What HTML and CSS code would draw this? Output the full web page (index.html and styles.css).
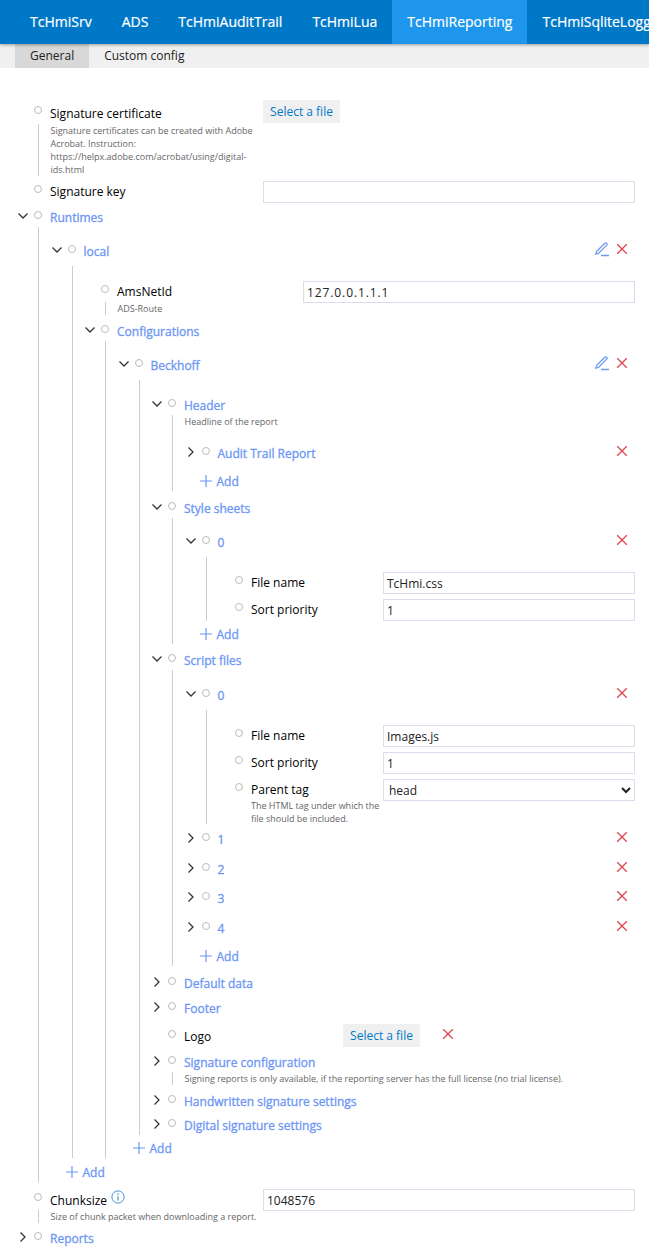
FILE: index.html
```html
<!DOCTYPE html>
<html lang="en">
<head>
    <meta charset="UTF-8">
    <meta name="viewport" content="width=device-width, initial-scale=1.0">
    <title>TcHmiReporting</title>
    <link rel="stylesheet" href="styles.css">
</head>
<body>
    <svg class="icon-defs" width="0" height="0">
        <symbol id="chev-down" viewBox="0 0 12 12"><path d="M1.5 3.5 6 8l4.5-4.5" fill="none" stroke="#333" stroke-width="1.25"/></symbol>
        <symbol id="chev-right" viewBox="0 0 12 12"><path d="M3.5 1.5 8 6l-4.5 4.5" fill="none" stroke="#333" stroke-width="1.25"/></symbol>
        <symbol id="del" viewBox="0 0 16 16"><path d="M3.2 3.2l9.6 9.6M12.8 3.2 3.2 12.8" fill="none" stroke="#e0454f" stroke-width="1.3"/></symbol>
        <symbol id="edit" viewBox="0 0 16 16"><path d="M2.5 10.5 10.8 2.2a1.3 1.3 0 0 1 1.9 0 1.3 1.3 0 0 1 0 1.9L4.5 12.4l-2.6.7zM7 14.5h8" fill="none" stroke="#6f9bf0" stroke-width="1.3"/></symbol>
        <symbol id="plus" viewBox="0 0 12 12"><path d="M6 0v12M0 6h12" fill="none" stroke="#6b96f5" stroke-width="1.2"/></symbol>
    </svg>

    <nav class="tabs">
        <a href="#">TcHmiSrv</a>
        <a href="#">ADS</a>
        <a href="#">TcHmiAuditTrail</a>
        <a href="#">TcHmiLua</a>
        <a href="#" class="active">TcHmiReporting</a>
        <a href="#">TcHmiSqliteLogger</a>
    </nav>
    <nav class="subtabs">
        <a href="#" class="active">General</a>
        <a href="#">Custom config</a>
    </nav>

    <main class="tree">
        <div class="row">
            <span class="chev"></span><span class="dot"></span>
            <span class="label w0 lower">Signature certificate</span>
            <button class="file-btn">Select a file</button>
        </div>
        <p class="desc desc-sig">Signature certificates can be created with Adobe Acrobat. Instruction: https://helpx.adobe.com/acrobat/using/digital-ids.html</p>

        <div class="row mt5">
            <span class="chev"></span><span class="dot"></span>
            <span class="label w0">Signature key</span>
            <input class="field" type="text" value="">
        </div>

        <div class="row mt4">
            <span class="chev"><svg><use href="#chev-down"/></svg></span><span class="dot"></span>
            <span class="group">Runtimes</span>
        </div>
        <div class="children list">
            <div class="row">
                <span class="chev"><svg><use href="#chev-down"/></svg></span><span class="dot"></span>
                <span class="group">local</span>
                <span class="actions"><svg><use href="#edit"/></svg><svg><use href="#del"/></svg></span>
            </div>
            <div class="children after-item">
                <div class="row">
                    <span class="chev"></span><span class="dot"></span>
                    <span class="label w2">AmsNetId</span>
                    <input class="field ip" type="text" value="127.0.0.1.1.1">
                </div>
                <p class="desc tight">ADS-Route</p>

                <div class="row mt6">
                    <span class="chev"><svg><use href="#chev-down"/></svg></span><span class="dot"></span>
                    <span class="group">Configurations</span>
                </div>
                <div class="children list">
                    <div class="row">
                        <span class="chev"><svg><use href="#chev-down"/></svg></span><span class="dot"></span>
                        <span class="group">Beckhoff</span>
                        <span class="actions"><svg><use href="#edit"/></svg><svg><use href="#del"/></svg></span>
                    </div>
                    <div class="children after-item">
                        <div class="row">
                            <span class="chev"><svg><use href="#chev-down"/></svg></span><span class="dot"></span>
                            <span class="group">Header</span>
                        </div>
                        <p class="desc">Headline of the report</p>
                        <div class="children">
                            <div class="row">
                                <span class="chev"><svg><use href="#chev-right"/></svg></span><span class="dot"></span>
                                <span class="group">Audit Trail Report</span>
                                <span class="actions"><svg><use href="#del"/></svg></span>
                            </div>
                            <a href="#" class="add mt8"><svg><use href="#plus"/></svg>Add</a>
                        </div>

                        <div class="row mt7">
                            <span class="chev"><svg><use href="#chev-down"/></svg></span><span class="dot"></span>
                            <span class="group">Style sheets</span>
                        </div>
                        <div class="children list">
                            <div class="row">
                                <span class="chev"><svg><use href="#chev-down"/></svg></span><span class="dot"></span>
                                <span class="group">0</span>
                                <span class="actions"><svg><use href="#del"/></svg></span>
                            </div>
                            <div class="children after-item">
                                <div class="row">
                                    <span class="chev"></span><span class="dot"></span>
                                    <span class="label w6">File name</span>
                                    <input class="field" type="text" value="TcHmi.css">
                                </div>
                                <div class="row mt5">
                                    <span class="chev"></span><span class="dot"></span>
                                    <span class="label w6">Sort priority</span>
                                    <input class="field" type="text" value="1">
                                </div>
                            </div>
                            <a href="#" class="add mt3"><svg><use href="#plus"/></svg>Add</a>
                        </div>

                        <div class="row mt6">
                            <span class="chev"><svg><use href="#chev-down"/></svg></span><span class="dot"></span>
                            <span class="group">Script files</span>
                        </div>
                        <div class="children">
                            <div class="row">
                                <span class="chev"><svg><use href="#chev-down"/></svg></span><span class="dot"></span>
                                <span class="group">0</span>
                                <span class="actions"><svg><use href="#del"/></svg></span>
                            </div>
                            <div class="children after-item">
                                <div class="row">
                                    <span class="chev"></span><span class="dot"></span>
                                    <span class="label w6">File name</span>
                                    <input class="field" type="text" value="Images.js">
                                </div>
                                <div class="row mt5">
                                    <span class="chev"></span><span class="dot"></span>
                                    <span class="label w6">Sort priority</span>
                                    <input class="field" type="text" value="1">
                                </div>
                                <div class="row mt5">
                                    <span class="chev"></span><span class="dot"></span>
                                    <div class="label w6">
                                        Parent tag
                                        <p class="note">The HTML tag under which the file should be included.</p>
                                    </div>
                                    <select class="field"><option>head</option></select>
                                </div>
                            </div>
                            <div class="row mt5">
                                <span class="chev"><svg><use href="#chev-right"/></svg></span><span class="dot"></span>
                                <span class="group">1</span>
                                <span class="actions"><svg><use href="#del"/></svg></span>
                            </div>
                            <div class="row mt10">
                                <span class="chev"><svg><use href="#chev-right"/></svg></span><span class="dot"></span>
                                <span class="group">2</span>
                                <span class="actions"><svg><use href="#del"/></svg></span>
                            </div>
                            <div class="row mt9">
                                <span class="chev"><svg><use href="#chev-right"/></svg></span><span class="dot"></span>
                                <span class="group">3</span>
                                <span class="actions"><svg><use href="#del"/></svg></span>
                            </div>
                            <div class="row mt10">
                                <span class="chev"><svg><use href="#chev-right"/></svg></span><span class="dot"></span>
                                <span class="group">4</span>
                                <span class="actions"><svg><use href="#del"/></svg></span>
                            </div>
                            <a href="#" class="add mt8"><svg><use href="#plus"/></svg>Add</a>
                        </div>

                        <div class="row mt7">
                            <span class="chev"><svg><use href="#chev-right"/></svg></span><span class="dot"></span>
                            <span class="group">Default data</span>
                        </div>
                        <div class="row mt5">
                            <span class="chev"><svg><use href="#chev-right"/></svg></span><span class="dot"></span>
                            <span class="group">Footer</span>
                        </div>
                        <div class="row mt8">
                            <span class="chev"></span><span class="dot"></span>
                            <span class="label w4">Logo</span>
                            <button class="file-btn">Select a file</button>
                            <span class="inline-del"><svg><use href="#del"/></svg></span>
                        </div>
                        <div class="row mt6">
                            <span class="chev"><svg><use href="#chev-right"/></svg></span><span class="dot"></span>
                            <span class="group">Signature configuration</span>
                        </div>
                        <p class="desc">Signing reports is only available, if the reporting server has the full license (no trial license).</p>
                        <div class="row mt6">
                            <span class="chev"><svg><use href="#chev-right"/></svg></span><span class="dot"></span>
                            <span class="group">Handwritten signature settings</span>
                        </div>
                        <div class="row mt4">
                            <span class="chev"><svg><use href="#chev-right"/></svg></span><span class="dot"></span>
                            <span class="group">Digital signature settings</span>
                        </div>
                    </div>
                    <a href="#" class="add mt3"><svg><use href="#plus"/></svg>Add</a>
                </div>
            </div>
            <a href="#" class="add mt4"><svg><use href="#plus"/></svg>Add</a>
        </div>

        <div class="row mt7">
            <span class="chev"></span><span class="dot"></span>
            <span class="label w0">Chunksize<svg class="info" viewBox="0 0 16 16"><circle cx="8" cy="8" r="7" fill="none" stroke="#2f7fd0"/><path d="M8 7v5M8 4v1.6" stroke="#2f7fd0" stroke-width="1.2"/></svg></span>
            <input class="field" type="text" value="1048576">
        </div>
        <p class="desc tight">Size of chunk packet when downloading a report.</p>

        <div class="row mt5">
            <span class="chev"><svg><use href="#chev-right"/></svg></span><span class="dot"></span>
            <span class="group">Reports</span>
        </div>
    </main>
</body>
</html>
```

FILE: styles.css
```css
* {
    box-sizing: border-box;
}

body {
    margin: 0;
    font-family: "Open Sans", "Noto Sans", sans-serif;
    font-size: 12px;
    color: #000;
    background-color: white;
    overflow: hidden;
}

.icon-defs {
    position: absolute;
}

.tabs {
    display: flex;
    height: 44px;
    padding-left: 15px;
    background-color: #0078c8;
    box-shadow: 0 1px 3px rgba(0, 0, 0, 0.35);
    position: relative;
    overflow: hidden;
}

.tabs a {
    flex: none;
    padding: 0 15px;
    line-height: 44px;
    font-size: 14px;
    color: white;
    text-decoration: none;
    -webkit-text-stroke: 0.2px white;
}

.tabs a.active {
    background-color: #1e96ec;
}

.subtabs {
    display: flex;
    height: 24px;
    padding-left: 15px;
    background-color: #f0f0f0;
}

.subtabs a {
    padding: 0 15px;
    line-height: 24px;
    color: #222;
    text-decoration: none;
}

.subtabs a.active {
    background-color: #d8d8d8;
}

.tree {
    padding: 34px 14px 0 17px;
}

.row {
    display: flex;
    align-items: flex-start;
    min-height: 20px;
}

.chev {
    flex: none;
    width: 12px;
    height: 12px;
    margin-top: 3px;
}

.chev svg {
    display: block;
    width: 12px;
    height: 12px;
}

.dot {
    flex: none;
    width: 8px;
    height: 8px;
    margin: 4px 8px 0 5px;
    border: 1px solid #bbb;
    border-radius: 50%;
}

.label {
    flex: none;
    margin: 1px 0 -1px;
    line-height: 20px;
}

.label.lower {
    margin-top: 2px;
}

.w0 { width: 213px; }
.w2 { width: 186px; }
.w4 { width: 159px; }
.w6 { width: 132px; }

.group {
    margin: 1px 0 -1px;
    line-height: 20px;
    color: #6b96f5;
    -webkit-text-stroke: 0.3px #6b96f5;
}

.field {
    flex: 1;
    min-width: 0;
    height: 22px;
    padding: 0 3px;
    border: 1px solid #dcdcec;
    border-radius: 0;
    background-color: white;
    font-family: inherit;
    font-size: 12px;
    color: #222;
}

.field.ip {
    letter-spacing: 0.9px;
}

select.field {
    padding: 0 1px;
}

.file-btn {
    flex: none;
    width: 77px;
    height: 23px;
    margin: -2px 0 -1px;
    padding: 0;
    border: none;
    background-color: #f0f0f0;
    font-family: inherit;
    font-size: 12px;
    color: #0078c8;
}

.actions {
    display: flex;
    margin-left: auto;
    margin-right: 5px;
    gap: 4px;
}

.actions svg,
.inline-del svg {
    display: block;
    width: 16px;
    height: 16px;
}

.inline-del {
    margin-left: 20px;
}

.desc {
    margin: 0 0 0 21px;
    padding-left: 11.5px;
    border-left: 1px solid #ccc;
    font-size: 9px;
    line-height: 13px;
    color: #666;
}

.desc.tight {
    margin-top: -1px;
}

.desc-sig {
    margin-top: 1px;
    width: 225.5px;
}

.note {
    margin: -1px 0 0;
    font-size: 9px;
    line-height: 13px;
    color: #666;
}

.children {
    margin-left: 21px;
    padding: 15px 0 0 11.5px;
    border-left: 1px solid #ccc;
}

.children.list {
    padding-top: 14px;
}

.children.after-item {
    margin-top: 5px;
}

.add {
    display: flex;
    align-items: center;
    height: 20px;
    padding-left: 15px;
    color: #6b96f5;
    text-decoration: none;
    -webkit-text-stroke: 0.3px #6b96f5;
}

.add svg {
    width: 12px;
    height: 12px;
    margin-right: 5px;
}

.info {
    width: 14px;
    height: 14px;
    margin-left: 4px;
    vertical-align: 1px;
}

.mt3 { margin-top: 3px; }
.mt4 { margin-top: 4px; }
.mt5 { margin-top: 5px; }
.mt6 { margin-top: 6px; }
.mt7 { margin-top: 7px; }
.mt8 { margin-top: 8px; }
.mt9 { margin-top: 9px; }
.mt10 { margin-top: 10px; }
```
